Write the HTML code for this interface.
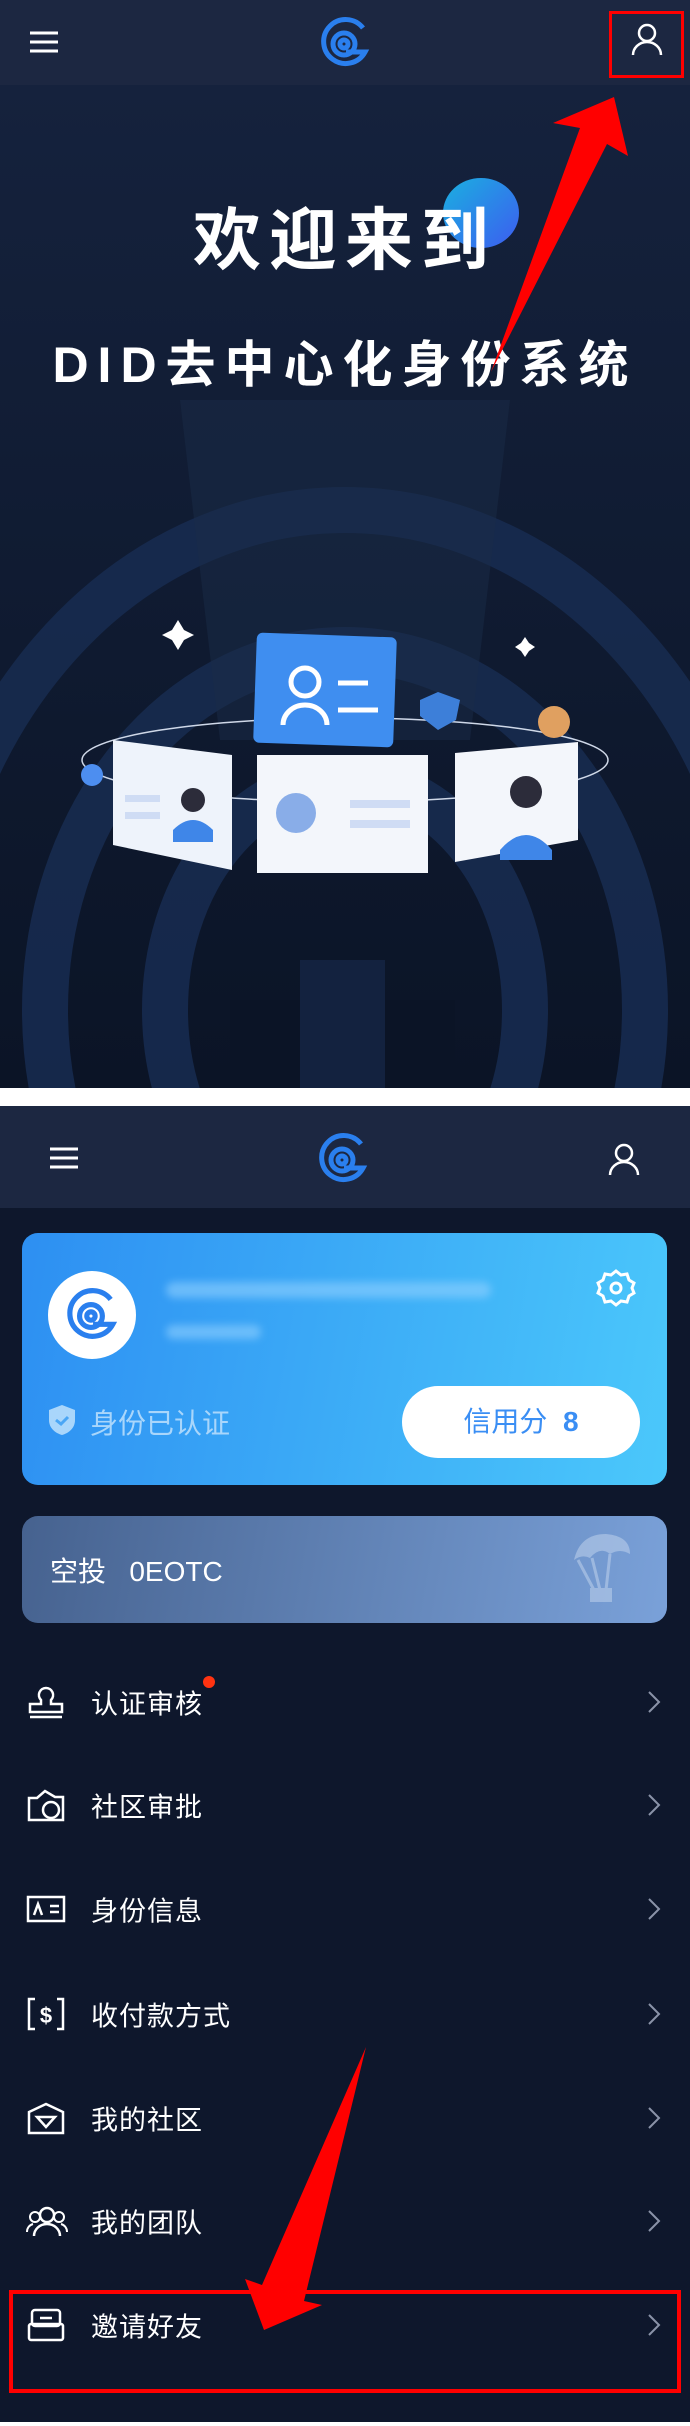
<!DOCTYPE html>
<html><head><meta charset="utf-8"><style>
*{margin:0;padding:0;box-sizing:border-box}
body{width:690px;height:2426px;background:#fff;font-family:"Liberation Sans","Noto Sans CJK SC",sans-serif;position:relative;overflow:hidden}
.abs{position:absolute}
.hdr{position:absolute;left:0;width:690px;background:#1c2741}
.menu{position:absolute;left:0;width:690px;height:104px;color:#fff;font-size:27px}
.menu .t{position:absolute;left:91px;top:50%;transform:translateY(-50%);letter-spacing:1px}
.menu .ic{position:absolute;left:26px;top:50%;transform:translateY(-50%)}
.menu .ar{position:absolute;right:28px;top:50%;transform:translateY(-50%)}
</style></head><body>
<div class="abs" style="left:0;top:0;width:690px;height:1088px;background:linear-gradient(#16233f,#0f1a30 60%,#0b1426);overflow:hidden">
<svg class="abs" style="left:0;top:0" width="690" height="1088">
<g fill="none" stroke="#172b4f" stroke-width="46" opacity="0.9">
<ellipse cx="345" cy="1010" rx="420" ry="500"/>
<ellipse cx="345" cy="1010" rx="300" ry="360"/>
<ellipse cx="345" cy="1010" rx="180" ry="230"/>
</g>
<rect x="230" y="1000" width="70" height="90" fill="#0b1426"/>
<rect x="385" y="1000" width="70" height="90" fill="#0b1426"/>
<rect x="300" y="960" width="85" height="130" fill="#13223f"/>
<polygon points="180,400 510,400 470,740 220,740" fill="#1a2b48" opacity="0.5"/>
<ellipse cx="345" cy="760" rx="263" ry="42" fill="none" stroke="#cfd8e8" stroke-width="1.5"/>
<circle cx="92" cy="775" r="11" fill="#4d8ef0"/>
<circle cx="554" cy="722" r="16" fill="#e0a060"/>
<path d="M178 620l-6 10-10 5 10 5 6 10 6-10 10-5-10-5z" fill="#fff"/>
<path d="M525 637l-4 6-6 4 6 4 4 6 4-6 6-4-6-4z" fill="#fff"/>
<rect x="255" y="635" width="140" height="110" rx="6" fill="#3f8ef0" transform="rotate(2 325 690)"/>
<circle cx="305" cy="682" r="14" fill="none" stroke="#fff" stroke-width="5"/>
<path d="M283 725a22 20 0 0 1 44 0" fill="none" stroke="#fff" stroke-width="5"/>
<path d="M338 683h30M338 710h40" stroke="#fff" stroke-width="5"/>
<path d="M420 700l18-8 22 8-4 20-18 10-18-14z" fill="#3d7fd9"/>
<polygon points="113,740 232,755 232,870 113,845" fill="#eef3fb"/>
<polygon points="257,755 428,755 428,873 257,873" fill="#f3f6fb"/>
<polygon points="455,753 578,742 578,840 455,862" fill="#f3f6fb"/>
<circle cx="193" cy="800" r="12" fill="#2c2c3a"/><path d="M173 830q20-20 40 0v12h-40z" fill="#3f86e8"/>
<circle cx="296" cy="813" r="20" fill="#5b8fe0" opacity="0.7"/>
<rect x="350" y="800" width="60" height="8" fill="#cfdcf4"/><rect x="350" y="820" width="60" height="8" fill="#cfdcf4"/>
<rect x="125" y="795" width="35" height="7" fill="#cfdcf4"/><rect x="125" y="812" width="35" height="7" fill="#cfdcf4"/>
<circle cx="526" cy="792" r="16" fill="#2c2c3a"/><path d="M500 850q26-30 52 0v10h-52z" fill="#3f86e8"/>
</svg>
<div class="abs" style="left:443px;top:178px;width:76px;height:70px;border-radius:50%;background:linear-gradient(135deg,#1ab0e0,#3d5cf0)"></div>
<div class="abs" style="left:0;top:196px;width:690px;text-align:center;color:#fff;font-size:68px;font-weight:bold;letter-spacing:8px;line-height:90px">欢迎来到</div>
<div class="abs" style="left:0;top:335px;width:690px;text-align:center;color:#fff;font-size:50px;font-weight:bold;letter-spacing:9px;line-height:60px">DID去中心化身份系统</div>
</div>
<div class="hdr" style="top:0;height:85px"></div>
<svg class="abs" style="left:28px;top:30px" width="34" height="26"><path d="M2 3h28M2 12h28M2 21h28" stroke="#fff" stroke-width="3"/></svg>
<svg class="abs" style="left:318px;top:16px" width="54" height="54" viewBox="0 0 54 54"><g fill="none" stroke="#2a7fee" stroke-width="5"><path d="M45 12A22 22 0 1 0 47 36H28"/><circle cx="26" cy="28" r="11"/><circle cx="26" cy="28" r="4"/></g></svg>
<div class="abs" style="left:609px;top:11px;width:75px;height:67px;border:3px solid #f00"></div>
<svg class="abs" style="left:630px;top:22px" width="34" height="36"><circle cx="17" cy="11" r="8" fill="none" stroke="#fff" stroke-width="2.5"/><path d="M3 33a14 13 0 0 1 28 0" fill="none" stroke="#fff" stroke-width="2.5"/></svg>
<svg class="abs" style="left:0;top:0" width="690" height="400"><polygon points="614,97 628,156 607,144 491,372 580,128 553,123" fill="#f00"/></svg>
<div class="abs" style="left:0;top:1106px;width:690px;height:1316px;background:#0e172c"></div>
<div class="hdr" style="top:1106px;height:102px"></div>
<svg class="abs" style="left:48px;top:1146px" width="34" height="26"><path d="M2 3h28M2 12h28M2 21h28" stroke="#fff" stroke-width="3"/></svg>
<svg class="abs" style="left:316px;top:1132px" width="54" height="54" viewBox="0 0 54 54"><g fill="none" stroke="#2a7fee" stroke-width="5"><path d="M45 12A22 22 0 1 0 47 36H28"/><circle cx="26" cy="28" r="11"/><circle cx="26" cy="28" r="4"/></g></svg>
<svg class="abs" style="left:607px;top:1142px" width="34" height="36"><circle cx="17" cy="11" r="8" fill="none" stroke="#fff" stroke-width="2.5"/><path d="M3 33a14 13 0 0 1 28 0" fill="none" stroke="#fff" stroke-width="2.5"/></svg>
<div class="abs" style="left:22px;top:1233px;width:645px;height:252px;border-radius:16px;background:linear-gradient(100deg,#2d8ff2,#4bc8fb)"></div>
<div class="abs" style="left:48px;top:1271px;width:88px;height:88px;border-radius:50%;background:#fff"></div>
<svg class="abs" style="left:64px;top:1287px" width="56" height="56" viewBox="0 0 54 54"><g fill="none" stroke="#2a7fee" stroke-width="5"><path d="M45 12A22 22 0 1 0 47 36H28"/><circle cx="26" cy="28" r="11"/><circle cx="26" cy="28" r="4"/></g></svg>
<div class="abs" style="left:166px;top:1282px;width:325px;height:16px;border-radius:8px;background:#8fd0ff;opacity:0.6;filter:blur(4px)"></div>
<div class="abs" style="left:166px;top:1325px;width:95px;height:14px;border-radius:7px;background:#8fd0ff;opacity:0.6;filter:blur(4px)"></div>
<svg class="abs" style="left:596px;top:1268px" width="40" height="40" viewBox="0 0 40 40"><path d="M20 3l5 4 6-1 2 6 5 3-2 5 2 5-5 3-2 6-6-1-5 4-5-4-6 1-2-6-5-3 2-5-2-5 5-3 2-6 6 1z" fill="none" stroke="#fff" stroke-width="3"/><circle cx="20" cy="20" r="5" fill="none" stroke="#fff" stroke-width="3"/></svg>
<svg class="abs" style="left:46px;top:1403px" width="32" height="34"><path d="M16 2l13 5v10c0 8-6 13-13 15C9 30 3 25 3 17V7z" fill="#a9d6fb"/><path d="M10 17l5 4 7-7" stroke="#4aa6f5" stroke-width="3" fill="none"/></svg>
<div class="abs" style="left:90px;top:1402px;color:#a9d6fb;font-size:28px">身份已认证</div>
<div class="abs" style="left:402px;top:1386px;width:238px;height:72px;border-radius:36px;background:#fff;color:#3a8ef4;font-size:28px;text-align:center;line-height:72px">信用分 &nbsp;<b>8</b></div>
<div class="abs" style="left:22px;top:1516px;width:645px;height:107px;border-radius:16px;background:linear-gradient(100deg,#46628f,#7aa1d9)"></div>
<div class="abs" style="left:50px;top:1550px;color:#fff;font-size:28px">空投 &nbsp;&nbsp;0EOTC</div>
<svg class="abs" style="left:570px;top:1530px" width="64" height="76" opacity="0.5"><path d="M4 30Q10 4 36 4Q60 6 60 24Q50 18 40 24Q30 16 20 28Q12 24 4 30z" fill="#c6d7ef"/><path d="M8 30l16 30M22 28l8 32M40 24l-4 36" stroke="#c6d7ef" stroke-width="3"/><rect x="20" y="58" width="22" height="14" fill="#c6d7ef"/></svg>
<div class="menu" style="top:1650px"><svg class="ic" width="40" height="34"><path d="M20 3a7 7 0 0 1 5 12v4h11v8H4v-8h11v-4A7 7 0 0 1 20 3zM4 32h32" fill="none" stroke="#fff" stroke-width="2.5"/></svg><span class="t">认证审核</span><span class="abs" style="left:203px;top:26px;width:12px;height:12px;border-radius:50%;background:#f31"></span><svg class="ar" width="16" height="26"><path d="M3 3l10 10-10 10" fill="none" stroke="#8a93a8" stroke-width="2"/></svg></div>
<div class="menu" style="top:1753px"><svg class="ic" width="40" height="34"><path d="M3 32V10h8l8-7 10 6h8v23z" fill="none" stroke="#fff" stroke-width="2.5"/><circle cx="25" cy="22" r="8" fill="none" stroke="#fff" stroke-width="2.5"/></svg><span class="t">社区审批</span><svg class="ar" width="16" height="26"><path d="M3 3l10 10-10 10" fill="none" stroke="#8a93a8" stroke-width="2"/></svg></div>
<div class="menu" style="top:1857px"><svg class="ic" width="40" height="34"><rect x="2" y="5" width="36" height="24" fill="none" stroke="#fff" stroke-width="2.5"/><path d="M8 23l4-11 4 11M24 14h9M24 20h9" stroke="#fff" stroke-width="2.5" fill="none"/></svg><span class="t">身份信息</span><svg class="ar" width="16" height="26"><path d="M3 3l10 10-10 10" fill="none" stroke="#8a93a8" stroke-width="2"/></svg></div>
<div class="menu" style="top:1962px"><svg class="ic" width="40" height="36"><path d="M9 3H3v30h6M31 3h6v30h-6" fill="none" stroke="#fff" stroke-width="2.5"/><text x="20" y="27" fill="#fff" font-size="22" font-weight="bold" text-anchor="middle" font-family="Liberation Sans">$</text></svg><span class="t">收付款方式</span><svg class="ar" width="16" height="26"><path d="M3 3l10 10-10 10" fill="none" stroke="#8a93a8" stroke-width="2"/></svg></div>
<div class="menu" style="top:2066px"><svg class="ic" width="40" height="34"><path d="M3 32V11l17-8 17 8v21z" fill="none" stroke="#fff" stroke-width="2.5"/><path d="M11 16h18l-9 10z" fill="none" stroke="#fff" stroke-width="2.5"/></svg><span class="t">我的社区</span><svg class="ar" width="16" height="26"><path d="M3 3l10 10-10 10" fill="none" stroke="#8a93a8" stroke-width="2"/></svg></div>
<div class="menu" style="top:2169px"><svg class="ic" width="42" height="34"><circle cx="21" cy="11" r="7" fill="none" stroke="#fff" stroke-width="2.5"/><path d="M8 32a13 12 0 0 1 26 0" fill="none" stroke="#fff" stroke-width="2.5"/><circle cx="9" cy="13" r="5" fill="none" stroke="#fff" stroke-width="2"/><circle cx="33" cy="13" r="5" fill="none" stroke="#fff" stroke-width="2"/><path d="M1 28a8 8 0 0 1 6-8M41 28a8 8 0 0 0-6-8" fill="none" stroke="#fff" stroke-width="2"/></svg><span class="t">我的团队</span><svg class="ar" width="16" height="26"><path d="M3 3l10 10-10 10" fill="none" stroke="#8a93a8" stroke-width="2"/></svg></div>
<div class="menu" style="top:2273px"><svg class="ic" width="40" height="36"><rect x="6" y="3" width="28" height="16" rx="3" fill="none" stroke="#fff" stroke-width="2.5"/><path d="M14 11h12" stroke="#fff" stroke-width="2.5"/><rect x="3" y="17" width="34" height="16" rx="2" fill="none" stroke="#fff" stroke-width="2.5"/></svg><span class="t">邀请好友</span><svg class="ar" width="16" height="26"><path d="M3 3l10 10-10 10" fill="none" stroke="#8a93a8" stroke-width="2"/></svg></div>
<div class="abs" style="left:9px;top:2290px;width:672px;height:103px;border:4px solid #f00"></div>
<svg class="abs" style="left:0;top:2000px" width="690" height="360"><polygon points="366,47 304,301 322,305 264,330 245,279 262,285" fill="#f00"/></svg>
</body></html>
